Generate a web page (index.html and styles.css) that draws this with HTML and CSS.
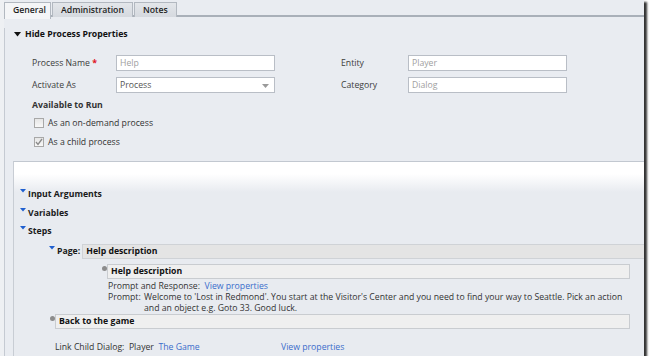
FILE: index.html
```html
<!DOCTYPE html>
<html lang="en">
<head>
    <meta charset="UTF-8">
    <title>Process - Help</title>
    <link rel="stylesheet" href="styles.css">
</head>
<body>
    <div class="window">
        <div class="tabs">
            <span class="tab active">General</span>
            <span class="tab">Administration</span>
            <span class="tab">Notes</span>
        </div>

        <div class="content">
            <div class="section-head">
                <svg class="tri" width="7" height="5" viewBox="0 0 7 5"><path d="M0 0h7L3.5 4.5z" fill="#111"/></svg>
                Hide Process Properties
            </div>

            <div class="props">
                <div class="label">Process Name <span class="req">*</span></div>
                <div class="field">Help</div>
                <div class="label">Entity</div>
                <div class="field">Player</div>

                <div class="label">Activate As</div>
                <div class="field select">Process
                    <svg class="arrow" width="7" height="4" viewBox="0 0 7 4"><path d="M0 0h7L3.5 4z" fill="#9a9a9a"/></svg>
                </div>
                <div class="label">Category</div>
                <div class="field">Dialog</div>
            </div>

            <div class="avail">Available to Run</div>
            <div class="check"><span class="box"></span>As an on-demand process</div>
            <div class="check"><span class="box checked"><svg width="8" height="8" viewBox="0 0 8 8"><path d="M1 4l2 2.5L7 1" fill="none" stroke="#8a8a8a" stroke-width="1.3"/></svg></span>As a child process</div>

            <div class="steps">
                <div class="node"><svg class="tri-blue" width="6" height="4" viewBox="0 0 6 4"><path d="M0 0h6L3 3.5z" fill="#1f5fcf"/></svg>Input Arguments</div>
                <div class="node"><svg class="tri-blue" width="6" height="4" viewBox="0 0 6 4"><path d="M0 0h6L3 3.5z" fill="#1f5fcf"/></svg>Variables</div>
                <div class="node"><svg class="tri-blue" width="6" height="4" viewBox="0 0 6 4"><path d="M0 0h6L3 3.5z" fill="#1f5fcf"/></svg>Steps</div>

                <div class="page-row">
                    <span class="page-label"><svg class="tri-blue" width="6" height="4" viewBox="0 0 6 4"><path d="M0 0h6L3 3.5z" fill="#1f5fcf"/></svg>Page:</span>
                    <div class="page-bar">Help description</div>
                </div>

                <div class="step step-inner">
                    <span class="dot"></span>
                    <div class="step-box">Help description</div>
                </div>
                <div class="details">
                    <div>Prompt and Response:&nbsp; <a href="#">View properties</a></div>
                    <div class="prompt">
                        <span class="prompt-key">Prompt:</span>
                        <span class="prompt-text">Welcome to 'Lost in Redmond'. You start at the Visitor's Center and you need to find your way to Seattle. Pick an action and an object e.g. Goto 33. Good luck.</span>
                    </div>
                </div>

                <div class="step step-outer">
                    <span class="dot"></span>
                    <div class="step-box">Back to the game</div>
                </div>
                <div class="link-row">
                    <span class="link-text">Link Child Dialog:&nbsp; Player&nbsp; <a href="#">The Game</a></span>
                    <a href="#">View properties</a>
                </div>
            </div>
        </div>
    </div>
</body>
</html>
```

FILE: styles.css
```css
body {
    margin: 0;
    background: #ffffff;
    font-family: "Open Sans", "Noto Sans", sans-serif;
    font-size: 8.7px;
    color: #3a3a3a;
}
.window {
    width: 644px;
    height: 356px;
    background: #e9ecf1;
    box-shadow: 3px 2px 2px rgba(0,0,0,0.8);
    overflow: hidden;
    border-left: 4px solid #eef0f3;
    box-sizing: border-box;
}
.tabs {
    display: flex;
    height: 17px;
    padding-top: 2px;
    box-sizing: border-box;
    border-bottom: 2px solid #a9b0b9;
}
.tab {
    height: 15px;
    line-height: 14px;
    padding: 0 8px;
    border: 1px solid #b2b8c0;
    border-bottom: none;
    background: linear-gradient(#e3e6ea, #d5d9df);
    color: #1e1e1e;
    font-weight: 600;
    box-sizing: border-box;
    margin-right: 1px;
}
.tab.active {
    background: #f4f5f7;
    height: 17px;
    margin-bottom: -2px;
    width: 47px;
}
.content {
    border-left: 1px solid #c5cad2;
    height: 339px;
}
.section-head {
    display: flex;
    align-items: center;
    height: 12px;
    margin-top: 11px;
    padding-left: 9px;
    font-weight: bold;
    color: #111;
}
.tri {
    margin-right: 4px;
}
.props {
    display: grid;
    grid-template-columns: 84px 225px 67px 160px;
    row-gap: 6px;
    margin-top: 15px;
    padding-left: 27px;
}
.label {
    line-height: 16px;
    color: #3c3c3c;
}
.req {
    color: #e0141e;
    font-weight: bold;
}
.field {
    position: relative;
    width: 159px;
    height: 16px;
    line-height: 14px;
    padding-left: 3px;
    border: 1px solid #b9bec6;
    background: #fff;
    color: #a0a0a0;
    box-sizing: border-box;
}
.field.select {
    color: #555;
}
.arrow {
    position: absolute;
    right: 5px;
    top: 6px;
}
.avail {
    margin-top: 6px;
    padding-left: 27px;
    line-height: 12px;
    font-weight: bold;
    color: #333;
}
.check {
    display: flex;
    align-items: center;
    height: 12px;
    margin-top: 6px;
    padding-left: 29px;
    color: #333;
}
.check + .check {
    margin-top: 7px;
}
.box {
    display: flex;
    align-items: center;
    justify-content: center;
    width: 10px;
    height: 10px;
    margin-right: 4px;
    border: 1px solid #a8a8a8;
    background: linear-gradient(#e6e6e6, #f8f8f8);
    box-sizing: border-box;
}
.steps {
    margin-top: 13px;
    margin-left: 8px;
    height: 196px;
    border-top: 1px solid #c2c8d0;
    border-left: 1px solid #c8cdd4;
    background: linear-gradient(#ffffff 0, #ffffff 12px, #e8ebf0 30px);
    padding-top: 26px;
    box-sizing: border-box;
}
.node {
    display: flex;
    align-items: center;
    height: 12px;
    padding-left: 6px;
    margin-bottom: 6.5px;
    font-weight: bold;
    color: #1a1a1a;
}
.tri-blue {
    flex: none;
    align-self: flex-start;
    margin-top: 1px;
    margin-right: 2px;
}
.page-row {
    display: flex;
    align-items: center;
    margin-top: 5px;
    padding-left: 35px;
}
.page-label {
    display: flex;
    align-items: center;
    flex: none;
    margin-right: 2px;
    font-weight: bold;
    color: #1a1a1a;
}
.page-bar {
    flex: 1;
    height: 15px;
    line-height: 13px;
    padding-left: 3px;
    border: 1px solid #cfd2d6;
    border-right: none;
    background: #e4e4e4;
    font-weight: bold;
    color: #111;
    box-sizing: border-box;
}
.step {
    display: flex;
    align-items: flex-start;
    padding-right: 14px;
}
.step-inner {
    margin-top: 5px;
    padding-left: 88px;
}
.step-outer {
    margin-top: 0;
    padding-left: 36px;
}
.dot {
    flex: none;
    width: 5px;
    height: 5px;
    margin-top: 2px;
    border-radius: 50%;
    background: #8c8c8c;
}
.step-box {
    flex: 1;
    height: 15px;
    line-height: 13px;
    padding-left: 3px;
    border: 1px solid #c9ccd0;
    background: #efefef;
    font-weight: bold;
    color: #111;
    box-sizing: border-box;
}
.details {
    padding-left: 94px;
    margin-top: 2px;
    line-height: 11px;
    color: #333;
}
.prompt {
    display: flex;
}
.prompt-key {
    width: 36px;
    flex: none;
}
.prompt-text {
    width: 492px;
}
a {
    color: #3a6ccb;
    text-decoration: none;
}
.link-row {
    display: flex;
    margin-top: 12px;
    padding-left: 41px;
    color: #333;
}
.link-text {
    width: 226px;
}
```
